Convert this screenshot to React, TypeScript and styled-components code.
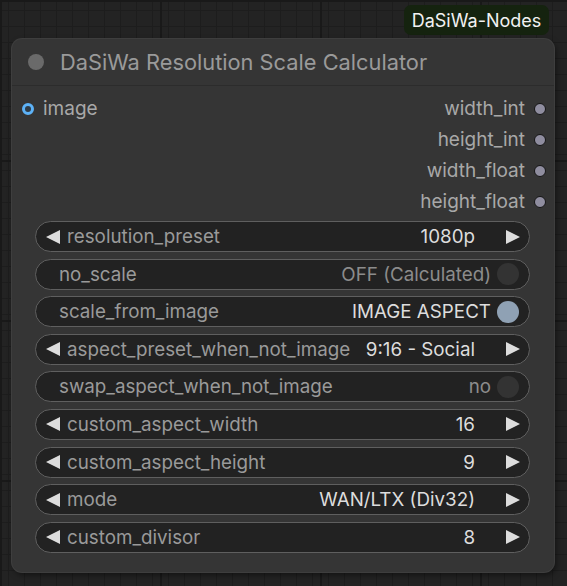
import React from "react";
import styled, { createGlobalStyle } from "styled-components";

const GlobalStyle = createGlobalStyle`
  html, body {
    margin: 0;
    padding: 0;
    width: 567px;
    height: 586px;
    overflow: hidden;
    font-family: Inter, "Noto Sans", sans-serif;
  }
  body {
    background-color: #232323;
    background-image:
      linear-gradient(to right, #191919 2px, transparent 2px),
      linear-gradient(to bottom, #191919 2px, transparent 2px),
      linear-gradient(to right, #1d1d1d 1px, transparent 1px),
      linear-gradient(to bottom, #1d1d1d 1px, transparent 1px);
    background-size: 160px 160px, 160px 160px, 16px 16px, 16px 16px;
    background-position: 0 0, 0 0, 8px 10px, 8px 10px;
  }
`;

type WidgetData =
  | { kind: "combo"; label: string; value: string }
  | { kind: "toggle"; label: string; value: string; on: boolean };

const widgets: WidgetData[] = [
  { kind: "combo", label: "resolution_preset", value: "1080p" },
  { kind: "toggle", label: "no_scale", value: "OFF (Calculated)", on: false },
  { kind: "toggle", label: "scale_from_image", value: "IMAGE ASPECT", on: true },
  { kind: "combo", label: "aspect_preset_when_not_image", value: "9:16 - Social" },
  { kind: "toggle", label: "swap_aspect_when_not_image", value: "no", on: false },
  { kind: "combo", label: "custom_aspect_width", value: "16" },
  { kind: "combo", label: "custom_aspect_height", value: "9" },
  { kind: "combo", label: "mode", value: "WAN/LTX (Div32)" },
  { kind: "combo", label: "custom_divisor", value: "8" },
];

const outputs = ["width_int", "height_int", "width_float", "height_float"];

export default function App() {
  return (
    <>
      <GlobalStyle />
      <Canvas>
        <BadgeRow>
          <Badge>DaSiWa-Nodes</Badge>
        </BadgeRow>
        <Node>
          <Title>
            <TitleDot />
            <TitleText>DaSiWa Resolution Scale Calculator</TitleText>
          </Title>
          <Slots>
            <InputCol>
              <SlotRow>
                <InputDot />
                <SlotLabel>image</SlotLabel>
              </SlotRow>
            </InputCol>
            <OutputCol>
              {outputs.map((o) => (
                <SlotRow key={o}>
                  <SlotLabel>{o}</SlotLabel>
                  <OutputDot />
                </SlotRow>
              ))}
            </OutputCol>
          </Slots>
          <Widgets>
            {widgets.map((w) =>
              w.kind === "combo" ? (
                <Widget key={w.label}>
                  <Arrow viewBox="0 0 16 16">
                    <polygon points="15,1 15,15 1,8" />
                  </Arrow>
                  <Label>{w.label}</Label>
                  <Value>{w.value}</Value>
                  <Arrow viewBox="0 0 16 16">
                    <polygon points="1,1 1,15 15,8" />
                  </Arrow>
                </Widget>
              ) : (
                <Widget key={w.label} $toggle>
                  <Label>{w.label}</Label>
                  <Value $toggle $dim={!w.on}>{w.value}</Value>
                  <Knob $on={w.on} />
                </Widget>
              )
            )}
          </Widgets>
        </Node>
      </Canvas>
    </>
  );
}

const Canvas = styled.div`
  display: flex;
  flex-direction: column;
  padding: 5px 13px 0 12px;
  width: 542px;
`;

const BadgeRow = styled.div`
  display: flex;
  justify-content: flex-end;
  padding-right: 5px;
  margin-bottom: 4px;
`;

const Badge = styled.div`
  height: 30px;
  width: 145px;
  box-sizing: border-box;
  display: flex;
  align-items: center;
  justify-content: center;
  background: #15230f;
  border-radius: 7px;
  color: #f2f2f2;
  font-size: 18px;
`;

const Node = styled.div`
  background: #353535;
  border-radius: 10px;
  box-shadow: 0 0 0 1px #3e3e3e, 2px 3px 6px rgba(0, 0, 0, 0.5);
  height: 533px;
  display: flex;
  flex-direction: column;
`;

const Title = styled.div`
  height: 46px;
  border-bottom: 1px solid #2c2c2c;
  display: flex;
  align-items: center;
  padding-left: 16px;
`;

const TitleDot = styled.div`
  width: 16px;
  height: 16px;
  border-radius: 50%;
  background: #6a6a6a;
  margin-right: 16px;
`;

const TitleText = styled.div`
  color: #9a9a9a;
  font-size: 21.8px;
`;

const Slots = styled.div`
  display: flex;
  justify-content: space-between;
  padding: 7px 0 0;
  height: 124px;
`;

const InputCol = styled.div`
  display: flex;
  flex-direction: column;
  padding-left: 10px;
`;

const OutputCol = styled.div`
  display: flex;
  flex-direction: column;
  align-items: flex-end;
  padding-right: 8px;
`;

const SlotRow = styled.div`
  height: 31px;
  display: flex;
  align-items: center;
  gap: 9px;
`;

const SlotLabel = styled.span`
  color: #a8a8a8;
  font-size: 19px;
`;

const InputDot = styled.div`
  width: 6px;
  height: 6px;
  border: 3px solid #5db2f7;
  border-radius: 50%;
  background: #2f3b46;
`;

const OutputDot = styled.div`
  width: 10px;
  height: 10px;
  border: 1.5px solid #151515;
  border-radius: 50%;
  background: #8f8d9f;
`;

const Widgets = styled.div`
  display: flex;
  flex-direction: column;
  gap: 6.6px;
  padding: 4px 24px 0 23px;
`;

const Widget = styled.div<{ $toggle?: boolean }>`
  height: 29px;
  border: 1.5px solid #5f5f5f;
  border-radius: 16px;
  background: #222222;
  display: flex;
  align-items: center;
  padding: ${(p) => (p.$toggle ? "0 10px 0 23px" : "0 8px 0 9px")};
  gap: 6px;
`;

const Arrow = styled.svg`
  width: 16px;
  height: 16px;
  fill: #dddddd;
  flex: none;
`;

const Label = styled.span`
  color: #9a9a9a;
  font-size: 18.8px;
  flex: 1;
  white-space: nowrap;
`;

const Value = styled.span<{ $dim?: boolean; $toggle?: boolean }>`
  color: ${(p) => (p.$dim ? "#8c8c8c" : "#dddddd")};
  font-size: 18.8px;
  white-space: nowrap;
  margin-right: ${(p) => (p.$toggle ? "0" : "24px")};
`;

const Knob = styled.div<{ $on: boolean }>`
  width: 22px;
  height: 22px;
  border-radius: 50%;
  background: ${(p) => (p.$on ? "#8fa1b4" : "#333333")};
  flex: none;
`;
